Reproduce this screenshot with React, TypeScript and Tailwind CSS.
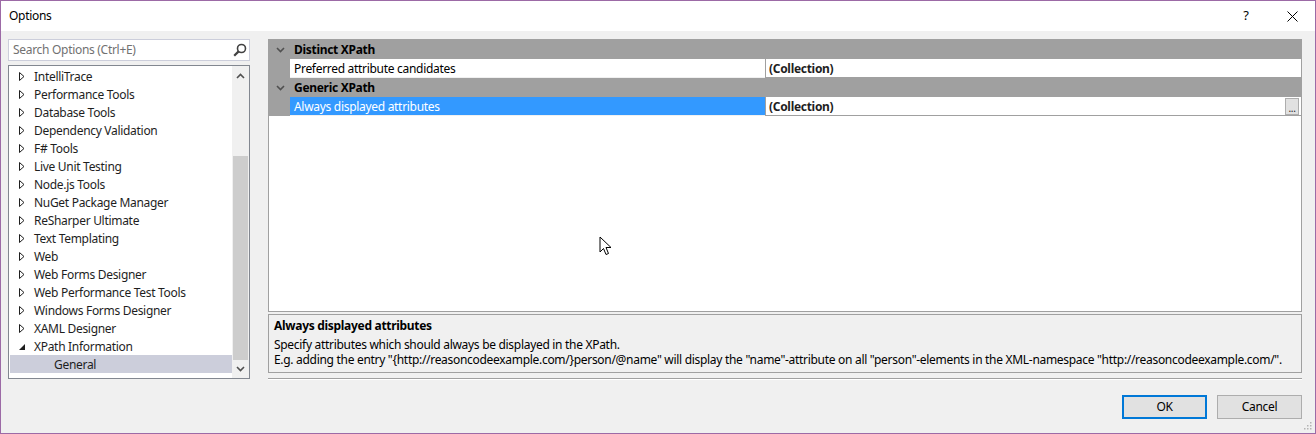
import React from "react"

const treeItems: { label: string; kind: "closed" | "open" | "child" }[] = [
  { label: "IntelliTrace", kind: "closed" },
  { label: "Performance Tools", kind: "closed" },
  { label: "Database Tools", kind: "closed" },
  { label: "Dependency Validation", kind: "closed" },
  { label: "F# Tools", kind: "closed" },
  { label: "Live Unit Testing", kind: "closed" },
  { label: "Node.js Tools", kind: "closed" },
  { label: "NuGet Package Manager", kind: "closed" },
  { label: "ReSharper Ultimate", kind: "closed" },
  { label: "Text Templating", kind: "closed" },
  { label: "Web", kind: "closed" },
  { label: "Web Forms Designer", kind: "closed" },
  { label: "Web Performance Test Tools", kind: "closed" },
  { label: "Windows Forms Designer", kind: "closed" },
  { label: "XAML Designer", kind: "closed" },
  { label: "XPath Information", kind: "open" },
  { label: "General", kind: "child" },
]

function Chevron({ up = false }: { up?: boolean }) {
  return (
    <svg width="9" height="6" viewBox="0 0 9 6" className="shrink-0">
      <path d={up ? "M1 5 L4.5 1.5 L8 5" : "M1 1 L4.5 4.5 L8 1"} fill="none" stroke="#505050" strokeWidth="1.6" />
    </svg>
  )
}

function TreeRow({ label, kind }: { label: string; kind: string }) {
  const selected = kind === "child"
  return (
    <div className={`flex h-[18px] items-center pt-[1px] ${selected ? "bg-[#cccedb]" : ""}`}>
      {kind === "child" ? (
        <span className="pl-[44px]">{label}</span>
      ) : (
        <>
          <span className="flex w-[24px] justify-end pr-[9px]">
            {kind === "closed" ? (
              <svg width="6" height="9" viewBox="0 0 6 9">
                <path d="M0.5 0.5 L5 4.5 L0.5 8.5 Z" fill="none" stroke="#1e1e1e" strokeWidth="1" />
              </svg>
            ) : (
              <svg width="6" height="6" viewBox="0 0 6 6">
                <path d="M6 0 L6 6 L0 6 Z" fill="#1e1e1e" />
              </svg>
            )}
          </span>
          <span>{label}</span>
        </>
      )}
    </div>
  )
}

function CategoryRow({ label }: { label: string }) {
  return (
    <div className="flex h-[19px] items-center bg-[#a0a0a0] pt-[1px]">
      <span className="flex w-[21px] justify-center pl-[2px]">
        <Chevron />
      </span>
      <span className="pl-[4px] font-bold text-black">{label}</span>
    </div>
  )
}

function PropertyRow({ name, value, selected, button }: { name: string; value: string; selected?: boolean; button?: boolean }) {
  return (
    <div className="flex h-[19px] bg-[#a0a0a0]">
      <div className="w-[21px] shrink-0" />
      <div className={`flex w-[475px] shrink-0 items-center border-b border-[#f0f0f0] pl-[4px] pt-[1px] ${selected ? "bg-[#3399ff] text-white" : "bg-white text-black"}`}>
        {name}
      </div>
      <div className="flex flex-1 items-center justify-between border-b border-l border-[#a0a0a0] bg-white pl-[3px] pr-[2px]">
        <span className="pt-[1px] font-bold">{value}</span>
        {button && (
          <span className="flex h-[17px] w-[14px] items-end justify-center border border-[#adadad] bg-[#e1e1e1] pb-[1px] text-[10px] leading-[10px]">
            ...
          </span>
        )}
      </div>
    </div>
  )
}

export default function App() {
  return (
    <div
      className="relative flex h-[434px] w-[1316px] flex-col border border-[#9c6aa6] bg-[#f0f0f0] text-[12px] tracking-[-0.3px] text-[#1e1e1e]"
      style={{ fontFamily: '"Noto Sans", "Segoe UI", sans-serif' }}
    >
      {/* title bar */}
      <div className="flex h-[30px] shrink-0 items-center bg-white pl-[8px] text-black">
        <span className="flex-1">Options</span>
        <span className="w-[46px] text-center text-[13px]">?</span>
        <span className="flex w-[46px] justify-center">
          <svg width="11" height="11" viewBox="0 0 11 11">
            <path d="M0.5 0.5 L10.5 10.5 M10.5 0.5 L0.5 10.5" stroke="#000" strokeWidth="1" />
          </svg>
        </span>
      </div>

      <div className="flex flex-1 gap-[18px] pl-[7px] pr-[13px] pt-[8px]">
        {/* left column */}
        <div className="flex w-[242px] shrink-0 flex-col gap-[4px]">
          <div className="flex h-[22px] items-center justify-between border border-[#cccedb] bg-white pl-[4px] pr-[2px]">
            <span className="text-[#717171]">Search Options (Ctrl+E)</span>
            <svg width="14" height="14" viewBox="0 0 14 14">
              <circle cx="8.5" cy="5.5" r="4" fill="none" stroke="#424242" strokeWidth="1.6" />
              <path d="M5.6 8.4 L1.2 12.8" stroke="#424242" strokeWidth="2.2" />
            </svg>
          </div>
          <div className="flex h-[314px] border border-[#828790] bg-white">
            <div className="flex-1 pl-[1px] pt-[1px]">
              {treeItems.map((it) => (
                <TreeRow key={it.label} label={it.label} kind={it.kind} />
              ))}
            </div>
            <div className="flex w-[17px] shrink-0 flex-col items-center bg-[#f0f0f0]">
              <div className="flex h-[20px] items-center">
                <Chevron up />
              </div>
              <div className="h-[70px]" />
              <div className="h-[204px] w-[15px] bg-[#cdcdcd]" />
              <div className="flex h-[18px] items-center">
                <Chevron />
              </div>
            </div>
          </div>
        </div>

        {/* right column */}
        <div className="flex flex-1 flex-col">
          <div className="h-[273px] border border-[#a0a0a0] bg-white">
            <CategoryRow label="Distinct XPath" />
            <PropertyRow name="Preferred attribute candidates" value="(Collection)" />
            <CategoryRow label="Generic XPath" />
            <PropertyRow name="Always displayed attributes" value="(Collection)" selected button />
          </div>
          <div className="mt-[2px] flex h-[59px] flex-col whitespace-nowrap border border-[#a0a0a0] px-[5px] pt-[3px] leading-[15px] text-black">
            <span className="font-bold">Always displayed attributes</span>
            <span className="mt-[4px]">Specify attributes which should always be displayed in the XPath.</span>
            <span>
              E.g. adding the entry "{"{"}http://reasoncodeexample.com/{"}"}person/@name" will display the "name"-attribute on all "person"-elements in the XML-namespace "http://reasoncodeexample.com/".
            </span>
          </div>
          <div className="mt-[5px] h-[2px] border-t border-[#a0a0a0] bg-white" />
          <div className="mt-[15px] flex justify-end gap-[10px] text-black">
            <button className="h-[24px] w-[85px] border-2 border-[#0078d7] bg-[#e1e1e1]">OK</button>
            <button className="h-[24px] w-[85px] border border-[#adadad] bg-[#e1e1e1]">Cancel</button>
          </div>
        </div>
      </div>

      {/* resize grip */}
      <svg className="absolute bottom-[3px] right-[3px]" width="9" height="9" viewBox="0 0 9 9">
        {[[7, 1], [7, 4], [4, 4], [7, 7], [4, 7], [1, 7]].map(([x, y]) => (
          <rect key={`${x}-${y}`} x={x} y={y} width="1.5" height="1.5" fill="#b4b4b4" />
        ))}
      </svg>

      {/* mouse pointer */}
      <svg className="absolute left-[598px] top-[235px]" width="14" height="21" viewBox="0 0 14 21">
        <path d="M1 1 L1 16 L4.5 12.5 L7 18.5 L9.5 17.5 L7 11.5 L12 11.5 Z" fill="#fff" stroke="#000" strokeWidth="1" />
      </svg>
    </div>
  )
}
